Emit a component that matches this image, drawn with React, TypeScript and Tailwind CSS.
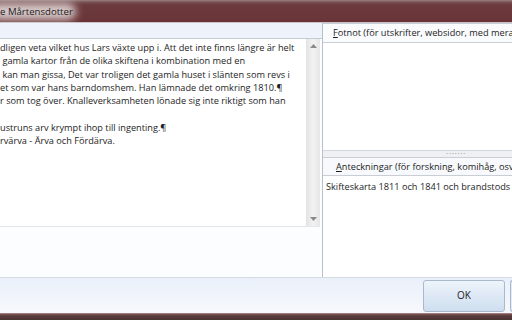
import React from 'react';

const lines = [
  'dligen veta vilket hus Lars växte upp i. Att det inte finns längre är helt',
  ' gamla kartor från de olika skiftena i kombination med en',
  ' kan man gissa, Det var troligen det gamla huset i slänten som revs i',
  'et som var hans barndomshem. Han lämnade det omkring 1810.¶',
  'r som tog över. Knalleverksamheten lönade sig inte riktigt som han',
  '',
  'ustruns arv krympt ihop till ingenting.¶',
  'rvärva - Ärva och Fördärva.',
];

function TitleBar() {
  return (
    <div className="relative h-[23px] shrink-0 bg-[linear-gradient(to_bottom,#9a8283_0px,#7a5255_2px,#6b3a3d_5px,#6a3437_100%)] border-b border-[#c9c2c6]">
      <div className="absolute left-[-10px] top-[3px] w-[86px] h-[17px] rounded-full bg-[#f3eeee]/80 blur-[4px]" />
      <div className="relative pl-0 pt-[5px] text-[9.6px] leading-[13px] text-[#1b1b1b] whitespace-pre">e Mårtensdotter</div>
    </div>
  );
}

function ScrollBar() {
  return (
    <div className="w-[14px] shrink-0 flex flex-col items-center justify-between bg-[linear-gradient(to_right,#e6e6e6,#f2f2f2_50%,#e6e6e6)] border-l border-[#e3e3e3] py-[5px]">
      <svg width="7" height="4" viewBox="0 0 7 4"><path d="M3.5 0L7 4H0z" fill="#8a8a8a" /></svg>
      <svg width="7" height="4" viewBox="0 0 7 4"><path d="M0 0h7L3.5 4z" fill="#8a8a8a" /></svg>
    </div>
  );
}

export default function App() {
  return (
    <div className="w-[512px] h-[320px] overflow-hidden flex flex-col bg-[#eef3fb] font-['Open_Sans',sans-serif]">
      <TitleBar />

      <div className="flex-1 flex min-h-0">
        {/* left: text */}
        <div className="w-[322px] shrink-0 flex flex-col">
          <div className="h-[15px] shrink-0 bg-[#eef3fb]" />
          <div className="flex-1 flex flex-col bg-[#fcfdfe] border-t border-[#c5cbd3]">
            <div className="h-[188px] flex border-b border-[#e4e7ea] bg-white mr-[2px]">
              <div className="flex-1 overflow-hidden pt-[2px] text-[9.2px] leading-[13.3px] text-[#1d1d1d]">
                {lines.map((l, i) => (
                  <div key={i} className="whitespace-pre h-[13.3px]">{l}</div>
                ))}
              </div>
              <ScrollBar />
            </div>
            <div className="flex-1" />
          </div>
        </div>

        {/* right: notes */}
        <div className="flex-1 flex flex-col border-l border-[#b7c0cb] bg-white">
          <div className="h-[20px] shrink-0 flex items-center pl-[10px] border-t border-b border-[#c9ced6] bg-[#fafbfd] text-[9.2px] text-[#1d1d1d] whitespace-nowrap">
            <span><span className="underline">F</span>otnot (för utskrifter, websidor, med mera</span>
          </div>
          <div className="h-[107px] shrink-0 bg-white" />
          <div className="h-[7px] shrink-0 flex justify-center items-end bg-[#eef0f3] border-t border-[#d4d8de]">
            <span className="ml-[76px] text-[7px] leading-[6px] tracking-[1px] text-[#666]">·······</span>
          </div>
          <div className="h-[19px] shrink-0 flex items-center pl-[13px] border-t border-b border-[#c9ced6] bg-[#f7f9fc] text-[9.2px] text-[#1d1d1d] whitespace-nowrap">
            <span><span className="underline">A</span>nteckningar (för forskning, komihåg, osv</span>
          </div>
          <div className="flex-1 pl-[3px] pt-[4px] text-[9.2px] leading-[13px] text-[#1d1d1d] whitespace-nowrap bg-white">
            Skifteskarta 1811 och 1841 och brandstods
          </div>
        </div>
      </div>

      {/* buttons */}
      <div className="h-[36px] shrink-0 flex items-center justify-end gap-[5px] border-t border-[#d5dbe3] bg-[linear-gradient(to_bottom,#eaf0fa,#f6f8fc)]">
        <button className="w-[82px] h-[32px] rounded-[3px] border border-[#a9b8cb] bg-[linear-gradient(to_bottom,#eef4fb,#dde8f5_50%,#cfdff0)] text-[10px] text-[#1d1d1d]">
          OK
        </button>
        <div className="w-[6px] h-[32px] rounded-l-[3px] border border-r-0 border-[#a9b8cb] bg-[#e2ebf6] mr-[-4px]" />
      </div>

      <div className="h-[7px] shrink-0 bg-[linear-gradient(to_bottom,#c4a6a6_0px,#7b5556_1px,#5a3a3b_3px,#4a3334_100%)]" />
    </div>
  );
}
